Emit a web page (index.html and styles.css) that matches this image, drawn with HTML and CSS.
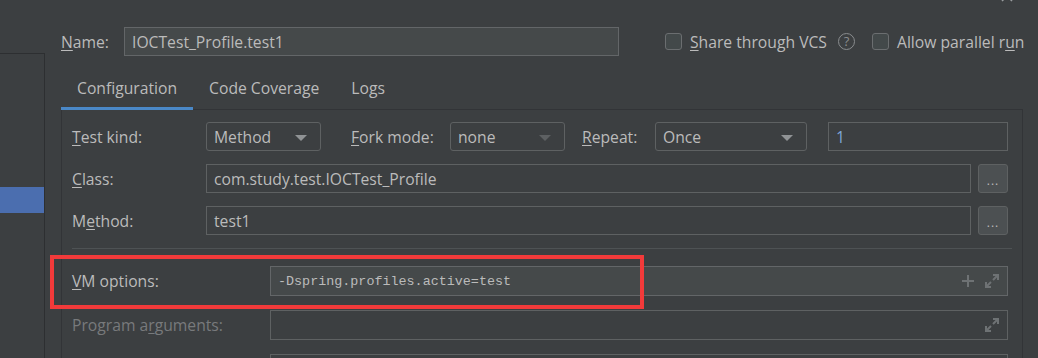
FILE: index.html
```html
<!DOCTYPE html>
<html lang="en">
<head>
  <meta charset="UTF-8" />
  <title>Run/Debug Configurations</title>
  <link rel="stylesheet" href="styles.css">
</head>
<body>
  <div class="window">
    <aside class="sidebar">
      <div class="sel"></div>
    </aside>

    <main class="main">
      <!-- name + checkboxes -->
      <div class="head">
        <span class="lbl name-lbl"><u>N</u>ame:</span>
        <div class="field light name-field">IOCTest_Profile.test1</div>
        <span class="check share"><span class="box"></span><span><u>S</u>hare through VCS</span></span>
        <span class="help">?</span>
        <span class="check parallel"><span class="box"></span><span>Allow parallel r<u>u</u>n</span></span>
      </div>

      <div class="tabs">
        <div class="tab active">Configuration</div>
        <div class="tab">Code Coverage</div>
        <div class="tab">Logs</div>
      </div>

      <div class="panel">
        <div class="row">
          <span class="lbl w-kind"><u>T</u>est kind:</span>
          <div class="combo c-method">Method<span class="arrow"></span></div>
          <span class="lbl w-fork"><u>F</u>ork mode:</span>
          <div class="combo c-none">none<span class="arrow"></span></div>
          <span class="lbl w-repeat"><u>R</u>epeat:</span>
          <div class="combo c-once">Once<span class="arrow"></span></div>
          <div class="field count">1</div>
        </div>

        <div class="row">
          <span class="lbl w-kind"><u>C</u>lass:</span>
          <div class="field grow">com.study.test.IOCTest_Profile</div>
          <div class="dots">...</div>
        </div>

        <div class="row">
          <span class="lbl w-kind">M<u>e</u>thod:</span>
          <div class="field grow">test1</div>
          <div class="dots">...</div>
        </div>

        <div class="sep"></div>

        <div class="row tall">
          <span class="lbl w-vm"><u>V</u>M options:</span>
          <div class="field light grow mono">-Dspring.profiles.active=test
            <span class="icons">
              <svg width="14" height="14" viewBox="0 0 14 14"><path d="M7 1v12M1 7h12" stroke="#6e7274" stroke-width="2" fill="none"/></svg>
              <svg width="16" height="16" viewBox="0 0 16 16"><path d="M9 2h5v5M14 2l-5 5M7 14H2V9M2 14l5-5" stroke="#6e7274" stroke-width="2" fill="none"/></svg>
            </span>
          </div>
        </div>

        <div class="row tall">
          <span class="lbl w-vm dim">Program a<u>r</u>guments:</span>
          <div class="field grow">
            <span class="icons">
              <svg width="16" height="16" viewBox="0 0 16 16"><path d="M9 2h5v5M14 2l-5 5M7 14H2V9M2 14l5-5" stroke="#6e7274" stroke-width="2" fill="none"/></svg>
            </span>
          </div>
        </div>

        <div class="row tall last">
          <span class="lbl w-vm"></span>
          <div class="field grow"></div>
        </div>
      </div>
    </main>
  </div>

  <!-- annotation + clipped close button -->
  <div class="mark"></div>
  <svg class="close" width="14" height="14" viewBox="0 0 14 14"><path d="M2 2l10 10M12 2L2 12" stroke="#9a9da0" stroke-width="1.5"/></svg>
</body>
</html>
```

FILE: styles.css
```css
html, body {
  margin: 0;
  height: 100%;
  overflow: hidden;
}
body {
  background-color: #3c3f41;
  color: #bbbbbb;
  font-family: 'Open Sans', sans-serif;
  font-size: 15.7px;
  position: relative;
}
u {
  text-underline-offset: 2px;
}
.window {
  display: flex;
  height: 100%;
}
.sidebar {
  width: 44px;
  flex: none;
  margin-top: 53px;
  border-top: 1px solid #2d2f31;
  border-right: 1px solid #2d2f31;
}
.sidebar .sel {
  margin-top: 133px;
  height: 26px;
  background-color: #4b6eaf;
}
.main {
  flex: 1;
  min-width: 0;
  padding: 27px 15px 0 16px;
}

/* header */
.head {
  display: flex;
  align-items: center;
  height: 29px;
  white-space: nowrap;
}
.name-lbl {
  width: 63px;
}
.field {
  box-sizing: border-box;
  height: 29px;
  border: 1px solid #5e6162;
  background-color: #3c3f41;
  padding: 0 7px;
  display: flex;
  align-items: center;
  white-space: nowrap;
}
.field.light {
  background-color: #45494a;
  border-color: #636668;
}
.name-field {
  width: 495px;
  flex: none;
}
.check {
  display: flex;
  align-items: center;
  gap: 8px;
  flex: none;
}
.box {
  width: 15px;
  height: 15px;
  border: 1px solid #6b6e70;
  border-radius: 3px;
  background-color: #43494a;
}
.share {
  margin-left: 46px;
}
.parallel {
  margin-left: 17px;
}
.help {
  flex: none;
  margin-left: 11px;
  width: 15px;
  height: 15px;
  border: 1.5px solid #8a8d8f;
  border-radius: 50%;
  color: #8a8d8f;
  font-size: 13px;
  line-height: 15px;
  text-align: center;
}

/* tabs */
.tabs {
  display: flex;
  margin-top: 14px;
  height: 40px;
  box-sizing: border-box;
  border-bottom: 1px solid #323437;
}
.tab {
  height: 40px;
  line-height: 37px;
  padding: 0 16px;
  box-sizing: border-box;
}
.tab.active {
  border-bottom: 3px solid #4a88c7;
}

/* panel */
.panel {
  border-left: 1px solid #323437;
  border-right: 1px solid #323437;
  padding: 12px 14px 0 10px;
  height: 236px;
}
.row {
  display: flex;
  align-items: center;
  height: 29px;
  margin-bottom: 13px;
}
.row.tall {
  height: 30px;
  margin-bottom: 14px;
}
.row.last {
  margin-bottom: 0;
}
.row.tall .field {
  height: 30px;
}
.lbl {
  flex: none;
}
.lbl.dim {
  color: #787a7c;
}
.w-kind { width: 134px; }
.w-fork { width: 99px; margin-left: 30px; }
.w-repeat { width: 73px; margin-left: 17px; }
.w-vm { width: 198px; }

.combo {
  box-sizing: border-box;
  height: 29px;
  border: 1px solid #5e6162;
  border-radius: 3px;
  padding: 0 7px;
  display: flex;
  align-items: center;
  position: relative;
}
.c-method { width: 115px; }
.c-none { width: 115px; }
.c-once { width: 152px; }
.arrow {
  position: absolute;
  right: 13px;
  top: 12px;
  border-left: 6px solid transparent;
  border-right: 6px solid transparent;
  border-top: 6px solid #909395;
}
.c-none .arrow {
  border-top-color: #5d6062;
}
.count {
  width: 180px;
  margin-left: 21px;
  color: #7fa6d6;
}
.grow {
  flex: 1;
}
.dots {
  box-sizing: border-box;
  width: 30px;
  height: 29px;
  margin-left: 7px;
  border: 1px solid #5e6162;
  border-radius: 3px;
  background-color: #4c5052;
  text-align: center;
  line-height: 32px;
  font-size: 12px;
  letter-spacing: 1px;
}
.sep {
  height: 1px;
  background-color: #4e5254;
  margin: 10px -4px 17px 0;
}
.mono {
  font-family: 'Liberation Mono', monospace;
  font-size: 13.4px;
}
.icons {
  margin-left: auto;
  display: flex;
  align-items: center;
  gap: 9px;
}

/* red annotation box */
.mark {
  position: absolute;
  left: 50px;
  top: 255px;
  width: 586px;
  height: 46px;
  border: 4px solid #f23a3a;
}
.close {
  position: absolute;
  left: 1000px;
  top: -11px;
}
```
